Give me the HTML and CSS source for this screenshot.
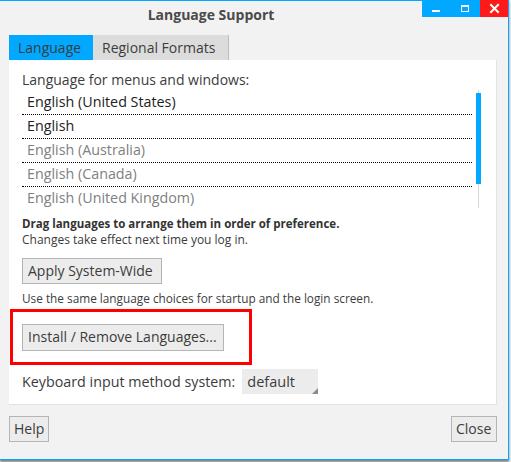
FILE: index.html
```html
<!DOCTYPE html>
<html>
<head>
<meta charset="utf-8">
<link rel="stylesheet" href="styles.css">
</head>
<body>
<div class="window">
  <div class="titlebar">
    <div class="title">Language Support</div>
    <div class="controls">
      <div class="ctl-blue">
        <svg width="58" height="17" viewBox="0 0 58 17">
          <rect x="10" y="10" width="8" height="2" fill="#fff"/>
          <rect x="39.5" y="5.5" width="7" height="6" fill="none" stroke="#fff" stroke-width="1"/>
          <rect x="39" y="5" width="8" height="2" fill="#fff"/>
        </svg>
      </div>
      <div class="ctl-red">
        <svg width="28" height="17" viewBox="0 0 28 17">
          <path d="M11 5 L18 12 M18 5 L11 12" stroke="#fff" stroke-width="2" stroke-linecap="square"/>
        </svg>
      </div>
    </div>
  </div>
  <div class="body">
    <div class="tabs">
      <div class="tab active">Language</div>
      <div class="tab">Regional Formats</div>
    </div>
    <div class="panel">
      <div class="label">Language for menus and windows:</div>
      <div class="listwrap">
        <div class="list">
          <div class="row">English (United States)</div>
          <div class="row">English</div>
          <div class="row dim">English (Australia)</div>
          <div class="row dim">English (Canada)</div>
          <div class="row dim last">English (United Kingdom)</div>
        </div>
        <div class="scroll"><div class="thumb"></div></div>
      </div>
      <div class="hint"><b>Drag languages to arrange them in order of preference.</b><br>Changes take effect next time you log in.</div>
      <div class="btn apply">Apply System-Wide</div>
      <div class="note">Use the same language choices for startup and the login screen.</div>
      <div class="highlight">
        <div class="btn install">Install / Remove Languages...</div>
      </div>
      <div class="kbd">
        <span>Keyboard input method system:</span>
        <div class="combo">default</div>
      </div>
    </div>
    <div class="footer">
      <div class="btn help">Help</div>
      <div class="btn close">Close</div>
    </div>
  </div>
</div>
</body>
</html>
```
FILE: styles.css
```css
html, body {
  margin: 0;
  padding: 0;
}
body {
  background: #ededed;
  width: 511px;
  height: 462px;
  overflow: hidden;
  font-family: "Open Sans", "DejaVu Sans", sans-serif;
  font-size: 13px;
  color: #3c3c3c;
}
.window {
  box-sizing: border-box;
  width: 509px;
  height: 460px;
  background: #f2f2f2;
  border-top: 1px solid #00a8ff;
  border-right: 1px solid #00a8ff;
  border-bottom: 1px solid #00a8ff;
  box-shadow: 0 2px 2px rgba(0,0,0,0.45);
  display: flex;
  flex-direction: column;
}
.titlebar {
  height: 34px;
  display: flex;
  align-items: flex-start;
}
.title {
  flex: 1;
  text-align: center;
  font-weight: bold;
  font-size: 14px;
  color: #4a4a4a;
  padding-top: 4px;
}
.controls {
  display: flex;
  margin-top: -1px;
}
.ctl-blue { width: 58px; height: 17px; background: #00a8ff; }
.ctl-red { width: 28px; height: 17px; background: #ff1a1a; }
.controls svg { display: block; }
.body {
  padding: 0 11px 0 9px;
  display: flex;
  flex-direction: column;
}
.tabs {
  display: flex;
  height: 25px;
}
.tab {
  box-sizing: border-box;
  height: 25px;
  line-height: 25px;
  font-size: 14px;
  background: #dcdcdc;
  border-right: 1px solid #bdbdbd;
  width: 136px;
  padding-left: 9px;
}
.tab.active {
  background: #00a8ff;
  border-right: none;
  width: 84px;
}
.panel {
  box-sizing: border-box;
  height: 345px;
  background: #fff;
  border-right: 1px solid #e2e2e2;
  border-bottom: 1px solid #e2e2e2;
  padding: 11px 0 0 13px;
}
.label {
  line-height: 18px;
  font-size: 14px;
}
.listwrap {
  display: flex;
  margin-top: 2px;
}
.list {
  width: 450px;
}
.row {
  height: 24px;
  box-sizing: border-box;
  line-height: 22px;
  padding-left: 5px;
  border-bottom: 1px dotted #000;
  color: #222;
  font-size: 14.3px;
}
.row.dim { color: #808080; }
.row.last { border-bottom: none; }
.scroll {
  margin-left: 4px;
  width: 5px;
  height: 118px;
  margin-top: -1px;
  background: linear-gradient(to right, transparent 2px, #d6d6d6 2px, #d6d6d6 3px, transparent 3px);
}
.thumb {
  margin-top: 3px;
  width: 5px;
  height: 91px;
  background: #00a8ff;
}
.hint {
  margin-top: 5px;
  font-size: 12px;
  line-height: 16px;
}
.hint b { color: #333; font-size: 11.5px; }
.btn {
  box-sizing: border-box;
  display: inline-block;
  height: 26px;
  line-height: 24px;
  padding: 0 5px;
  background: #ececec;
  border: 1px solid #b5b5b5;
  font-size: 14px;
  color: #3c3c3c;
}
.apply {
  margin-top: 10px;
  width: 140px;
}
.note {
  margin-top: 6px;
  font-size: 11.8px;
  line-height: 16px;
}
.highlight {
  box-sizing: border-box;
  width: 242px;
  height: 56px;
  margin-left: -12px;
  margin-top: 3px;
  border: 3px solid #ff0000;
  padding: 12px 0 0 9px;
}
.install {
  width: 202px;
  height: 27px;
}
.kbd {
  display: flex;
  align-items: center;
  margin-top: 4px;
  font-size: 14.3px;
}
.combo {
  position: relative;
  box-sizing: border-box;
  margin-left: 7px;
  width: 76px;
  height: 25px;
  line-height: 25px;
  padding-left: 5px;
  font-size: 14.5px;
  background: #ececec;
}
.combo::after {
  content: "";
  position: absolute;
  right: 0;
  bottom: 0;
  border-left: 6px solid transparent;
  border-bottom: 6px solid #8a8a8a;
}
.footer {
  display: flex;
  justify-content: space-between;
  margin-top: 11px;
}
.footer .btn {
  height: 26px;
  padding: 0 4px;
}
.help { width: 40px; }
.close { width: 46px; }
```
